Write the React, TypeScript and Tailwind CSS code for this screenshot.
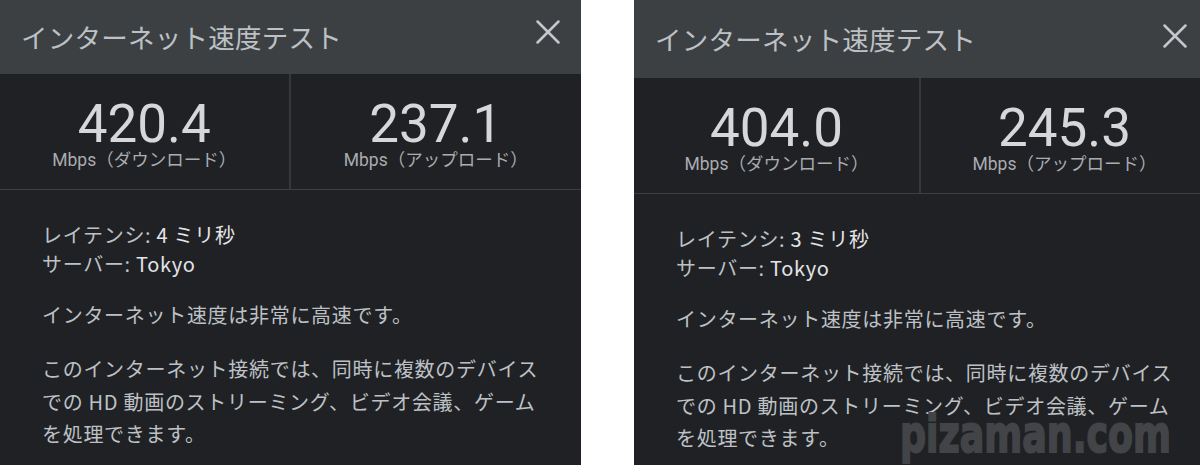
import { X } from "lucide-react";

interface SpeedPanelProps {
    down: string;
    up: string;
    latency: string;
    headerH: string;
    closeShift: string;
    width: string;
}

const jp = { fontFamily: '"Noto Sans CJK JP", "Noto Sans", sans-serif' };
const num = { fontFamily: 'Roboto, "Liberation Sans", sans-serif' };

const SpeedPanel = ({ down, up, latency, headerH, closeShift, width }: SpeedPanelProps) => {
    return (
        <div className={`flex shrink-0 flex-col bg-[#202124] ${width}`} style={jp}>
            <div className={`flex items-center justify-between bg-[#3c4043] pl-[21px] pr-[12px] ${headerH}`}>
                <span className="text-[26.5px] leading-none tracking-[0.25px] text-[#bdc1c6]">インターネット速度テスト</span>
                <X size={42} strokeWidth={1.45} className={`text-[#c4c7cb] ${closeShift}`} />
            </div>

            <div className="grid grid-cols-2 border-b border-[#3c4043]">
                <div className="flex h-[115px] flex-col items-center border-r-2 border-[#34373b] pt-[25px]">
                    <span className="text-[53px] leading-[50px] text-[#d6d7d9]" style={num}>{down}</span>
                    <span className="text-[17.5px] leading-[20px] text-[#a9acb1]">
                        <span style={num}>Mbps</span>（ダウンロード）
                    </span>
                </div>
                <div className="flex h-[115px] flex-col items-center pt-[25px]">
                    <span className="text-[53px] leading-[50px] text-[#d6d7d9]" style={num}>{up}</span>
                    <span className="text-[17.5px] leading-[20px] text-[#a9acb1]">
                        <span style={num}>Mbps</span>（アップロード）
                    </span>
                </div>
            </div>

            <div className="flex flex-col pl-[42px] pt-[30px] text-[20px] tracking-[0.7px] text-[#bdc1c6]">
                <div className="leading-[29px]">
                    <p>
                        レイテンシ: <span className="text-[#e3e4e6]">{latency} ミリ秒</span>
                    </p>
                    <p>
                        サーバー: <span className="text-[#e3e4e6]">Tokyo</span>
                    </p>
                </div>
                <p className="mt-[21px] leading-[32px]">インターネット速度は非常に高速です。</p>
                <p className="mt-[22px] whitespace-nowrap leading-[32.5px]">
                    このインターネット接続では、同時に複数のデバイス
                    <br />
                    での HD 動画のストリーミング、ビデオ会議、ゲーム
                    <br />
                    を処理できます。
                </p>
            </div>
        </div>
    );
};

export default function App() {
    return (
        <div className="relative flex h-[465px] w-[1200px] overflow-hidden bg-white">
            <SpeedPanel down="420.4" up="237.1" latency="4" headerH="h-[74px]" closeShift="-mt-[11px]" width="w-[581px]" />
            <div className="w-[53px] shrink-0" />
            <SpeedPanel down="404.0" up="245.3" latency="3" headerH="h-[78px]" closeShift="-mt-[7px]" width="w-[574px]" />

            <span
                className="pointer-events-none absolute left-[900px] top-[408px] origin-left scale-x-[0.7] text-[52px] font-bold leading-none text-[#424448] [-webkit-text-stroke:2px_#424448]"
                style={{ fontFamily: '"DejaVu Sans", sans-serif' }}
            >
                pizaman.com
            </span>
        </div>
    );
}
